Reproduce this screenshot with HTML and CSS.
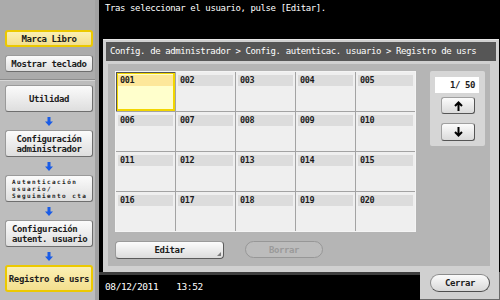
FILE: index.html
```html
<!DOCTYPE html>
<html lang="es">
<head>
  <meta charset="UTF-8" />
  <title>Registro de usrs</title>
  <link rel="stylesheet" href="styles.css">
</head>
<body>
  <div class="screen">
    <aside class="side">
      <div class="side-top">
        <button class="sbtn sel">Marca Libro</button>
        <button class="sbtn">Mostrar teclado</button>
      </div>
      <div class="side-nav">
        <button class="sbtn tall">Utilidad</button>
        <span class="arrow"><svg width="8" height="9" viewBox="0 0 8 9"><path d="M2.5 0h3v4.5H8L4 9 0 4.5h2.5z" fill="#1a5ce6"/></svg></span>
        <button class="sbtn tall">Configuración<br>administrador</button>
        <span class="arrow"><svg width="8" height="9" viewBox="0 0 8 9"><path d="M2.5 0h3v4.5H8L4 9 0 4.5h2.5z" fill="#1a5ce6"/></svg></span>
        <button class="sbtn tall tiny">Autenticación<br>usuario/<br>Seguimiento cta</button>
        <span class="arrow"><svg width="8" height="9" viewBox="0 0 8 9"><path d="M2.5 0h3v4.5H8L4 9 0 4.5h2.5z" fill="#1a5ce6"/></svg></span>
        <button class="sbtn tall left">Configuración<br>autent. usuario</button>
        <span class="arrow"><svg width="8" height="9" viewBox="0 0 8 9"><path d="M2.5 0h3v4.5H8L4 9 0 4.5h2.5z" fill="#1a5ce6"/></svg></span>
        <button class="sbtn tall sel">Registro de usrs</button>
      </div>
    </aside>

    <main class="main">
      <header class="msg">Tras seleccionar el usuario, pulse [Editar].</header>

      <section class="panel">
        <div class="crumb">Config. de administrador &gt; Config. autenticac. usuario &gt; Registro de usrs</div>
        <div class="body">
          <div class="list">
            <div class="grid">
              <div class="cell active"><span class="lbl">001</span></div>
              <div class="cell"><span class="lbl">002</span></div>
              <div class="cell"><span class="lbl">003</span></div>
              <div class="cell"><span class="lbl">004</span></div>
              <div class="cell"><span class="lbl">005</span></div>
              <div class="cell"><span class="lbl">006</span></div>
              <div class="cell"><span class="lbl">007</span></div>
              <div class="cell"><span class="lbl">008</span></div>
              <div class="cell"><span class="lbl">009</span></div>
              <div class="cell"><span class="lbl">010</span></div>
              <div class="cell"><span class="lbl">011</span></div>
              <div class="cell"><span class="lbl">012</span></div>
              <div class="cell"><span class="lbl">013</span></div>
              <div class="cell"><span class="lbl">014</span></div>
              <div class="cell"><span class="lbl">015</span></div>
              <div class="cell"><span class="lbl">016</span></div>
              <div class="cell"><span class="lbl">017</span></div>
              <div class="cell"><span class="lbl">018</span></div>
              <div class="cell"><span class="lbl">019</span></div>
              <div class="cell"><span class="lbl">020</span></div>
            </div>
            <div class="actions">
              <button class="btn edit">Editar</button>
              <button class="btn off">Borrar</button>
            </div>
          </div>

          <div class="pager">
            <div class="count">1/ 50</div>
            <button class="pbtn up"><svg width="9" height="10" viewBox="0 0 9 10"><path d="M4.5 10V1.5M1 5l3.5-3.5L8 5" stroke="#000" stroke-width="2" fill="none"/></svg></button>
            <button class="pbtn down"><svg width="9" height="10" viewBox="0 0 9 10"><path d="M4.5 0v8.5M1 5l3.5 3.5L8 5" stroke="#000" stroke-width="2" fill="none"/></svg></button>
          </div>
        </div>
      </section>

      <footer class="foot">
        <div class="clock"><span>08/12/2011</span><span>13:52</span></div>
        <div class="close-area"><button class="pill">Cerrar</button></div>
      </footer>
    </main>
  </div>
</body>
</html>
```

FILE: styles.css
```css
* {
  box-sizing: border-box;
}

body {
  margin: 0;
  font-family: "DejaVu Sans Mono", monospace;
  font-size: 9px;
  letter-spacing: -0.4px;
  color: #1c1c1c;
}

button {
  font-family: inherit;
  font-size: inherit;
  letter-spacing: inherit;
  color: inherit;
  padding: 0;
  cursor: pointer;
}

.screen {
  display: flex;
  width: 500px;
  height: 300px;
  overflow: hidden;
}

/* left column */
.side {
  width: 99px;
  background: #bdbdbd;
  border-right: 4px solid #a2a2a2;
  display: flex;
  flex-direction: column;
}

.side-top {
  height: 80px;
  padding: 30px 0 0 5px;
  background: #ababab;
  border-bottom: 1px solid #8c8c8c;
  box-shadow: 0 1px 0 #d6d6d6;
  display: flex;
  flex-direction: column;
  gap: 8px;
}

.side-nav {
  padding: 5px 0 0 5px;
  display: flex;
  flex-direction: column;
}

.sbtn {
  width: 88px;
  height: 17px;
  border: 1px solid #9a9a9a;
  border-right-color: #6e6e6e;
  border-bottom-color: #6e6e6e;
  border-radius: 3px;
  background: linear-gradient(#fbfbfb, #dedede);
  line-height: 10px;
  text-align: center;
  font-weight: bold;
}

.sbtn.tall {
  height: 27px;
}

.sbtn.tiny {
  font-size: 6px;
  line-height: 7px;
  letter-spacing: 1.4px;
  text-align: left;
  padding-left: 6px;
}

.sbtn.left {
  text-align: left;
  padding-left: 6px;
}

.sbtn.sel {
  background: linear-gradient(#fbf0b4, #f3df8e);
  border: 2px solid #ecc900;
}

.arrow {
  height: 18px;
  width: 88px;
  display: flex;
  align-items: center;
  justify-content: center;
}

.arrow svg {
  display: block;
}

/* right column */
.main {
  width: 401px;
  background: #000;
  display: flex;
  flex-direction: column;
}

.msg {
  height: 39px;
  padding: 3px 0 0 6px;
  color: #fff;
  line-height: 11px;
}

.panel {
  height: 233px;
  margin: 0 1px 0 4px;
  padding: 2px 3px 0 3px;
  background: #d0d0d0;
  border-top: 1px solid #e6e6e6;
}

.crumb {
  height: 19px;
  line-height: 19px;
  padding-left: 4px;
  background: #565656;
  color: #fff;
  white-space: nowrap;
}

.body {
  height: 202px;
  margin: 3px 6px 0 2px;
  padding: 7px 5px 7px 7px;
  background: #b5b5b5;
  display: flex;
  gap: 14px;
}

.grid {
  display: grid;
  grid-template-columns: repeat(5, 59px);
  grid-auto-rows: 39px;
  gap: 1px;
  padding: 1px;
  background: #a3a3a3;
  box-shadow: 0 0 0 1px #f4f4f4 inset;
}

.cell {
  background: #efefef;
  padding: 3px 2px 0 2px;
  font-size: 8.5px;
  font-weight: bold;
}

.cell .lbl {
  display: block;
  height: 11px;
  line-height: 11px;
  padding-left: 2px;
  background: #dcdcdc;
}

.cell.active {
  background: #ffffcc;
  box-shadow: inset 1px 1px 0 #555, inset -2px -2px 0 #f2d600, inset 2px 2px 0 #f2d600;
}

.cell.active .lbl {
  background: #fde79a;
}

.actions {
  display: flex;
  gap: 21px;
  margin-top: 9px;
}

.btn {
  height: 18px;
  font-weight: bold;
}

.btn.edit {
  position: relative;
  width: 109px;
  border: 1px solid #9a9a9a;
  border-right-color: #5a5a5a;
  border-bottom-color: #5a5a5a;
  border-radius: 4px;
  background: linear-gradient(#fcfcfc, #dcdcdc);
}

.btn.edit::after {
  content: "";
  position: absolute;
  right: 2px;
  bottom: 2px;
  border-left: 4px solid transparent;
  border-bottom: 4px solid #7c7c7c;
}

.btn.off {
  width: 78px;
  height: 17px;
  border: 1px solid #979797;
  border-radius: 9px;
  background: #bcbcbc;
  color: #9a9a9a;
}

.pager {
  width: 55px;
  height: 75px;
  padding: 6px 6px 0 5px;
  background: #d6d6d6;
  border-radius: 2px;
}

.count {
  height: 16px;
  line-height: 16px;
  background: #fff;
  text-align: right;
  padding-right: 4px;
  font-weight: bold;
}

.pbtn {
  display: flex;
  align-items: center;
  justify-content: center;
  width: 34px;
  height: 17px;
  margin: 4px 0 0 6px;
  border: 1px solid #a0a0a0;
  border-right-color: #555;
  border-bottom-color: #555;
  border-radius: 3px;
  background: linear-gradient(#fcfcfc, #dadada);
}

.pbtn.down {
  margin-top: 9px;
  height: 18px;
}

/* bottom bar */
.foot {
  height: 28px;
  display: flex;
}

.clock {
  width: 321px;
  border-top: 3px solid #3e3e3e;
  padding: 6px 0 0 6px;
  color: #fff;
  font-size: 9.5px;
  display: flex;
  gap: 18px;
}

.close-area {
  flex: 1;
  background: #d0d0d0;
  border-right: 1px solid #6a6a6a;
  border-bottom: 1px solid #6a6a6a;
  padding: 2px 0 0 10px;
}

.pill {
  width: 60px;
  height: 18px;
  border: 1px solid #8c8c8c;
  border-right-color: #4e4e4e;
  border-bottom-color: #4e4e4e;
  border-radius: 9px;
  background: linear-gradient(#fbfbfb, #d8d8d8);
  font-weight: bold;
}
```
